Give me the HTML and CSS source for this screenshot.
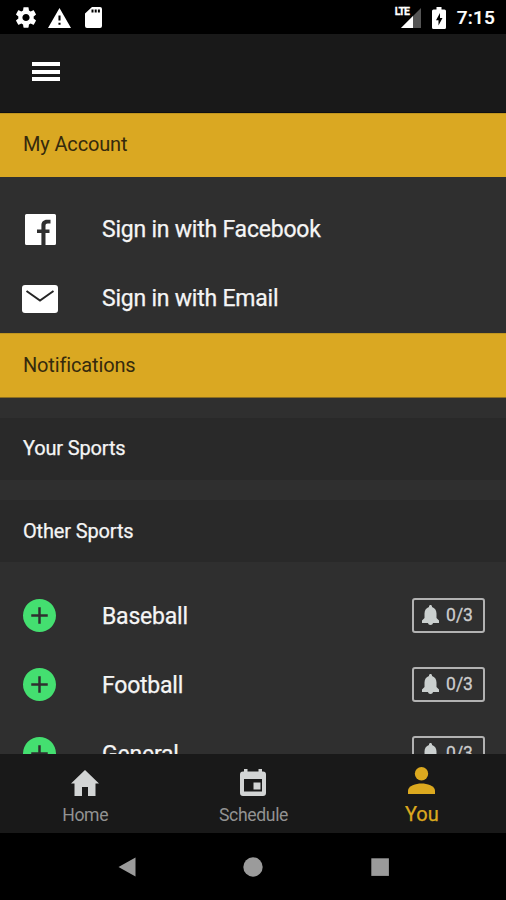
FILE: index.html
```
<!DOCTYPE html>
<html lang="en">
<head>
<meta charset="utf-8">
<title>You</title>
<link rel="stylesheet" href="styles.css">
</head>
<body>
<svg class="defs" width="0" height="0" aria-hidden="true">
  <symbol id="plus" viewBox="2 2 20 20"><path d="M12 2a10 10 0 1 0 0 20 10 10 0 0 0 0-20zm5 10.750h-4.250V17h-1.500v-4.250H7v-1.500h4.250V7h1.500v4.250H17z"/></symbol>
  <symbol id="bell" viewBox="0 0 17 20"><path d="M8.500 20c1.400 0 2.300-.8 2.500-2H6c.2 1.200 1.100 2 2.500 2zM14.500 13V8.500c0-3.300-1.800-5.700-4.500-6.500V1.500C10 .6 9.400 0 8.500 0S7 .6 7 1.500V2C4.300 2.800 2.500 5.200 2.500 8.500V13L0 15.500V18h17v-2.500z"/></symbol>
</svg>
<div class="phone">
  <header class="status">
    <svg class="gear" viewBox="2.27 2 19.46 20"><path d="M19.43 12.98c.04-.32.07-.64.07-.98s-.03-.66-.07-.98l2.11-1.65c.19-.15.24-.42.12-.64l-2-3.46c-.12-.22-.39-.3-.61-.22l-2.49 1c-.52-.4-1.08-.73-1.69-.98l-.38-2.65C14.46 2.18 14.25 2 14 2h-4c-.25 0-.46.18-.49.42l-.38 2.65c-.61.25-1.17.59-1.69.98l-2.49-1c-.23-.09-.49 0-.61.22l-2 3.46c-.13.22-.07.49.12.64l2.11 1.65c-.04.32-.07.65-.07.98s.03.66.07.98l-2.11 1.65c-.19.15-.24.42-.12.64l2 3.46c.12.22.39.3.61.22l2.49-1c.52.4 1.08.73 1.69.98l.38 2.65c.03.24.24.42.49.42h4c.25 0 .46-.18.49-.42l.38-2.65c.61-.25 1.17-.59 1.69-.98l2.49 1c.23.09.49 0 .61-.22l2-3.46c.12-.22.07-.49-.12-.64l-2.11-1.65zM12 15.5c-1.93 0-3.5-1.57-3.5-3.5s1.57-3.5 3.5-3.5 3.5 1.57 3.5 3.5-1.57 3.5-3.5 3.5z"/></svg>
    <svg class="warn" viewBox="1 2 22 19"><path d="M1 21h22L12 2 1 21zm12-3h-2v-2h2v2zm0-4h-2v-5h2v5z"/></svg>
    <svg class="sd" viewBox="0 0 17 21"><path d="M7 0h8a2 2 0 0 1 2 2v17a2 2 0 0 1-2 2H2a2 2 0 0 1-2-2V6.500zM6.500 2.500v3h2v-3zm3.200 0v3h2v-3zm3.200 0v3h2v-3z"/></svg>
    <div class="signal">
      <svg viewBox="0 0 20 20"><path class="dim" d="M20 0V20H0z"/><path d="M12 8v12H0z"/></svg>
      <span class="lte">LTE</span>
    </div>
    <svg class="battery" viewBox="0 0 14 22"><path d="M4.500 0h5v2.500H12.500A1.500 1.500 0 0 1 14 4v16.500a1.500 1.500 0 0 1-1.500 1.500h-11A1.500 1.500 0 0 1 0 20.500V4a1.500 1.500 0 0 1 1.500-1.500h3zM8 6l-4 7.300h2.500V18.500l4-7.500H8z"/></svg>
    <span class="clock">7:15</span>
  </header>
  <div class="toolbar"><div class="menu"><i></i><i></i><i></i></div></div>
  <main class="content">
    <h2 class="band">My Account</h2>
    <div class="account">
      <div class="row"><span class="lead"><svg class="fb" viewBox="0 0 31 31"><path d="M1.500 0h28A1.500 1.500 0 0 1 31 1.500v28a1.500 1.500 0 0 1-1.500 1.500H20.500V19h4v-3.600h-4v-3.600c0-1.400.7-2.200 2.200-2.200H25.500V5.800h-3.500c-3.500 0-5.600 2.300-5.600 5.400v4.200H12V19h4.400v12H1.500A1.500 1.500 0 0 1 0 29.500v-28A1.500 1.500 0 0 1 1.500 0z"/></svg></span><span class="name">Sign in with Facebook</span></div>
      <div class="row"><span class="lead"><svg class="mail" viewBox="0 0 36 28"><rect width="36" height="28" rx="3"/><path class="flap" d="M4.500 6L18 15.500 31.500 6"/></svg></span><span class="name">Sign in with Email</span></div>
    </div>
    <h2 class="band notif">Notifications</h2>
    <h3 class="group">Your Sports</h3>
    <h3 class="group other">Other Sports</h3>
    <div class="sports">
      <div class="row"><span class="lead"><svg class="add"><use href="#plus"/></svg></span><span class="name">Baseball</span><span class="count"><svg class="bell"><use href="#bell"/></svg>0/3</span></div>
      <div class="row"><span class="lead"><svg class="add"><use href="#plus"/></svg></span><span class="name">Football</span><span class="count"><svg class="bell"><use href="#bell"/></svg>0/3</span></div>
      <div class="row"><span class="lead"><svg class="add"><use href="#plus"/></svg></span><span class="name">General</span><span class="count"><svg class="bell"><use href="#bell"/></svg>0/3</span></div>
    </div>
  </main>
  <nav class="tabs">
    <div class="tab"><svg class="home" viewBox="0 0 28 26"><path d="M11 26v-9h6v9h7.500V13.500H28L14 0 0 13.500h3.500V26z"/></svg><span>Home</span></div>
    <div class="tab"><svg class="cal" viewBox="0 0 26 27"><path d="M4 0h3.500v2.500h11V0h3.500v2.500h1a3 3 0 0 1 3 3V24a3 3 0 0 1-3 3H3a3 3 0 0 1-3-3V5.500a3 3 0 0 1 3-3h1zM4 10v12.500h18V10zM13.500 13.500h7v7h-7z"/></svg><span>Schedule</span></div>
    <div class="tab active"><svg class="person" viewBox="0 0 27 27"><circle cx="13.500" cy="6.700" r="6.700"/><path d="M0 27v-3.500c0-4.500 8-7 13.500-7S27 19 27 23.500V27z"/></svg><span>You</span></div>
  </nav>
  <footer class="system">
    <svg viewBox="0 0 20 20"><path d="M1.500 10L18.500 .5v19z"/></svg>
    <svg viewBox="0 0 20 20"><circle cx="10" cy="10" r="9.700"/></svg>
    <svg viewBox="0 0 20 20"><path d="M1.300 1.300h17.600v17.600H1.300z"/></svg>
  </footer>
</div>
</body>
</html>
```

FILE: styles.css
```
* { box-sizing: border-box; }
body { margin: 0; background: #000; font-family: Roboto, sans-serif; color: #f5f5f5; }
svg { display: block; fill: currentColor; flex: none; fill-rule: evenodd; }
.defs { position: absolute; }
.phone { width: 506px; height: 900px; display: flex; flex-direction: column; overflow: hidden; }

.status { height: 34px; flex: none; display: flex; align-items: center; padding: 1px 11px 0 16px; color: #fff; }
.gear { width: 20px; height: 21px; }
.warn { width: 23px; height: 20px; margin-left: 12px; }
.sd { width: 17px; height: 21px; margin-left: 14px; }
.signal { position: relative; margin-left: auto; width: 20px; height: 20px; }
.signal svg { width: 20px; height: 20px; }
.dim { fill: #555; }
.lte { position: absolute; left: -6px; top: -1px; padding-right: 1px; background: #000; font-size: 10.500px; line-height: 10px; font-weight: 700; letter-spacing: -.9px; -webkit-text-stroke: .3px; }
.battery { width: 14px; height: 22px; margin-left: 11px; }
.clock { margin-left: 11px; font-size: 19px; font-weight: 500; letter-spacing: .2px; line-height: 24px; -webkit-text-stroke: .2px; }

.toolbar { height: 79px; flex: none; background: #191919; padding: 28px 32px; border-bottom: 1px solid #0e0f12; }
.menu { width: 28px; display: flex; flex-direction: column; gap: 3.500px; }
.menu i { height: 4px; background: #fff; }

.content { flex: 1; min-height: 0; overflow: hidden; background: #2f2f2f; }
.band { margin: 0; height: 64px; padding: 0 23px; background: #daa822; color: #352a0d; font-size: 20px; letter-spacing: -.15px; font-weight: 400; line-height: 60px; border-top: 1px solid #c0951f; }
.account { height: 156px; padding-top: 18px; }
.notif { height: 65px; line-height: 62px; border-bottom: 1px solid #8b6e22; }
.group { margin: 20px 0 0; height: 62px; padding: 0 23px; background: #292929; font-size: 20px; letter-spacing: -.15px; font-weight: 400; line-height: 60px; -webkit-text-stroke: .25px; }
.other { line-height: 62px; }
.sports { padding-top: 19px; }
.row { height: 69px; display: flex; align-items: center; padding: 0 21px 0 22px; }
.lead { width: 80px; flex: none; }
.name { font-size: 23px; letter-spacing: -.22px; line-height: 30px; -webkit-text-stroke: .25px; }
.sports .name { padding-top: 2px; }
.fb { width: 31px; height: 31px; margin-left: 3px; color: #fff; }
.mail { width: 36px; height: 28px; color: #fff; }
.flap { fill: none; stroke: #252525; stroke-width: 2; }
.add { width: 33px; height: 33px; margin-left: 1px; color: #44df70; }
.count { margin-left: auto; width: 73px; height: 35px; border: 2px solid #b2b2b2; border-radius: 3px; display: flex; align-items: center; justify-content: center; gap: 7px; padding-right: 2px; padding-bottom: 1px; font-size: 17.500px; color: #cdcdcd; -webkit-text-stroke: .3px; }
.bell { width: 17px; height: 20px; color: #cbd0cf; }

.tabs { height: 79px; flex: none; display: flex; background: #191919; color: #929292; padding-left: 1px; }
.tab { flex: 1; display: flex; flex-direction: column; align-items: center; justify-content: flex-end; padding-bottom: 8px; font-size: 17.600px; letter-spacing: -.35px; line-height: 20px; gap: 9px; }
.home { width: 28px; height: 26px; color: #d2d4d4; }
.cal { width: 26px; height: 27px; color: #d2d4d4; }
.person { width: 27px; height: 27px; }
.active { color: #dca91f; font-size: 20px; letter-spacing: 0; gap: 10px; padding-bottom: 9px; -webkit-text-stroke: .25px; }

.system { height: 67px; flex: none; display: flex; justify-content: center; align-items: center; gap: 106.500px; color: #9b9b9b; }
.system svg { width: 20px; height: 20px; }
```
